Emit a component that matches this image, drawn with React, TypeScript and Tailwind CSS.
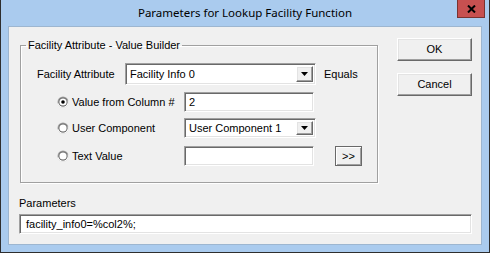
import React from "react";

const sunken =
  "border border-t-[#a0a0a0] border-l-[#a0a0a0] border-r-white border-b-white shadow-[inset_1px_1px_0_#696969,inset_-1px_-1px_0_#e3e3e3] bg-white";
const raised =
  "border border-t-[#ffffff] border-l-[#ffffff] border-r-[#696969] border-b-[#696969] shadow-[inset_-1px_-1px_0_#a0a0a0,inset_1px_1px_0_#e3e3e3] bg-[#f0f0f0]";

function DropArrow() {
  return (
    <div className={`flex h-full w-[17px] items-center justify-center ${raised}`}>
      <svg width="7" height="4" viewBox="0 0 7 4">
        <path d="M0 0H7L3.5 4Z" fill="#000" />
      </svg>
    </div>
  );
}

function Combo({ value, width }: { value: string; width: string }) {
  return (
    <div className={`flex h-full items-stretch p-[2px] ${sunken} ${width}`}>
      <div className="flex flex-1 items-center pl-[2px]">{value}</div>
      <DropArrow />
    </div>
  );
}

function Radio({ checked, label }: { checked?: boolean; label: string }) {
  return (
    <div className="flex w-[127px] items-center gap-[3px]">
      <svg width="12" height="12" viewBox="0 0 12 12">
        <circle cx="6" cy="6" r="5.5" fill="#a0a0a0" />
        <path d="M0.6 7.5A5.5 5.5 0 0 0 11.4 4.5 L10.4 4.8A4.5 4.5 0 0 1 1.6 7.2Z" fill="#fff" />
        <circle cx="6" cy="6" r="4.5" fill="#696969" />
        <circle cx="6" cy="6" r="3.6" fill="#fff" />
        {checked ? <circle cx="6" cy="6" r="1.8" fill="#000" /> : null}
      </svg>
      <span>{label}</span>
    </div>
  );
}

export default function App() {
  return (
    <div
      className="flex h-[253px] w-[490px] flex-col border-x border-b border-[#2e2e2e] bg-[#aacbee] text-[11px] text-black"
      style={{ fontFamily: '"Liberation Sans", Arial, sans-serif' }}
    >
      <div className="relative flex h-[26px] shrink-0 items-center justify-center">
        <span className="pb-[1px] text-[11.5px]" style={{ fontFamily: '"Noto Sans", "Liberation Sans", sans-serif' }}>
          Parameters for Lookup Facility Function
        </span>
        <div className="absolute top-0 right-[4px] flex h-[18px] w-[28px] items-center justify-center border border-t-0 border-[#7a3330] bg-[#c75050]">
          <svg width="9" height="8" viewBox="0 0 9 8">
            <path d="M1 0.5L8 7.5M8 0.5L1 7.5" stroke="#000" strokeWidth="2" />
          </svg>
        </div>
      </div>

      <div className="mx-[7px] mb-[7px] flex flex-1 flex-col border border-[#9db6d0] bg-[#f0f0f0]">
        <div className="flex">
          <fieldset className="mt-[12px] ml-[11px] h-[144px] w-[358px] border border-[#a0a0a0] shadow-[1px_1px_0_#fff,inset_1px_1px_0_#fff]">
            <legend className="ml-[5px] px-[2px] leading-[13px]">Facility Attribute - Value Builder</legend>
            <div className="flex flex-col pt-[11px]">
              <div className="flex h-[22px] items-center pl-[16px]">
                <span className="w-[88px]">Facility Attribute</span>
                <Combo value="Facility Info 0" width="w-[191px]" />
                <span className="ml-[8px]">Equals</span>
              </div>
              <div className="mt-[7px] flex h-[20px] items-center pl-[36px]">
                <Radio checked label="Value from Column #" />
                <div className={`flex h-full w-[130px] items-center pl-[4px] ${sunken}`}>2</div>
              </div>
              <div className="mt-[6px] flex h-[20px] items-center pl-[36px]">
                <Radio label="User Component" />
                <Combo value="User Component 1" width="w-[132px]" />
              </div>
              <div className="mt-[8px] flex h-[20px] items-center pl-[36px]">
                <Radio label="Text Value" />
                <div className={`h-full w-[130px] ${sunken}`} />
                <div className="ml-[21px] flex h-full w-[27px] items-center justify-center border border-[#696969] bg-[#f0f0f0] shadow-[inset_1px_1px_0_#fff,inset_-1px_-1px_0_#a0a0a0]">
                  &gt;&gt;
                </div>
              </div>
            </div>
          </fieldset>

          <div className="mt-[11px] ml-[19px] flex flex-col gap-[12px]">
            <div className={`flex h-[23px] w-[75px] items-center justify-center ${raised}`}>OK</div>
            <div className={`flex h-[23px] w-[75px] items-center justify-center ${raised}`}>Cancel</div>
          </div>
        </div>

        <div className="mt-[14px] ml-[10px] leading-[13px]">Parameters</div>
        <div className={`mt-[4px] ml-[10px] flex h-[20px] w-[453px] items-center pl-[6px] ${sunken}`}>
          facility_info0=%col2%;
        </div>
      </div>
    </div>
  );
}
